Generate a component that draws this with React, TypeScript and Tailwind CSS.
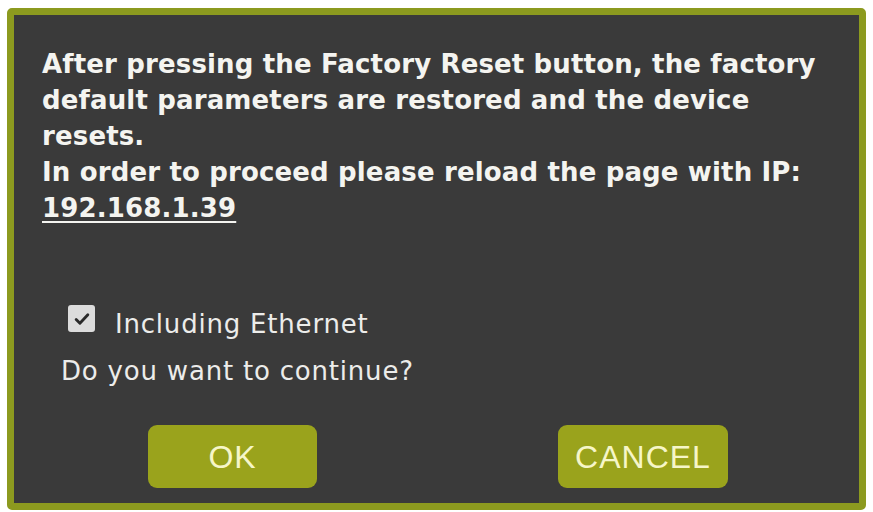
import { useState } from "react"

/**
 * Factory reset confirmation dialog.
 * Dark panel with an olive frame, a bold warning paragraph,
 * an "Including Ethernet" option and OK / CANCEL actions.
 */
export default function App() {
  const [withEthernet, setWithEthernet] = useState(true)

  return (
    <div className="h-[512px] w-[873px] overflow-hidden bg-white pl-[7px] pt-[8px] font-['DejaVu_Sans',Verdana,sans-serif]">
      <div className="flex h-[502px] w-[859px] flex-col rounded-[5px] border-[7px] border-[#8c9a1f] bg-[#3a3a3a]">
        <p className="pl-[28px] pr-[16px] pt-[31px] text-[26px] font-bold leading-[36px] tracking-[0.15px] text-[#f4f4f0]">
          After pressing the Factory Reset button, the factory default parameters are restored and the device resets.
          <br />
          In order to proceed please reload the page with IP:
          <br />
          <span className="underline decoration-2 underline-offset-4">192.168.1.39</span>
        </p>

        <label className="mt-[81px] flex items-start gap-[20px] pl-[54px] text-[26px] leading-[34px] tracking-[0.8px] text-[#ececea]">
          <button
            type="button"
            onClick={() => setWithEthernet((v) => !v)}
            className="-mt-[2px] flex h-[27px] w-[27px] items-center justify-center rounded-[3px] bg-[#dcdcdc]"
            aria-pressed={withEthernet}
          >
            {withEthernet && (
              <svg viewBox="0 0 24 24" className="h-[20px] w-[20px]">
                <path d="M5 12.5l4.5 4.5L19 7" fill="none" stroke="#2a2a2a" strokeWidth="3.4" strokeLinecap="round" strokeLinejoin="round" />
              </svg>
            )}
          </button>
          Including Ethernet
        </label>

        <p className="mt-[13px] pl-[47px] text-[26px] leading-[34px] tracking-[0.8px] text-[#ececea]">Do you want to continue?</p>

        <div className="mt-[37px] flex pl-[134px] font-['Liberation_Sans',Arial,sans-serif]">
          <button className="h-[63px] w-[169px] rounded-[9px] bg-[#9aa31c] text-[32px] tracking-[1px] text-[#f6f6c8]">OK</button>
          <button className="ml-[241px] h-[63px] w-[170px] rounded-[9px] bg-[#9aa31c] text-[32px] tracking-[1px] text-[#f6f6c8]">CANCEL</button>
        </div>
      </div>
    </div>
  )
}
